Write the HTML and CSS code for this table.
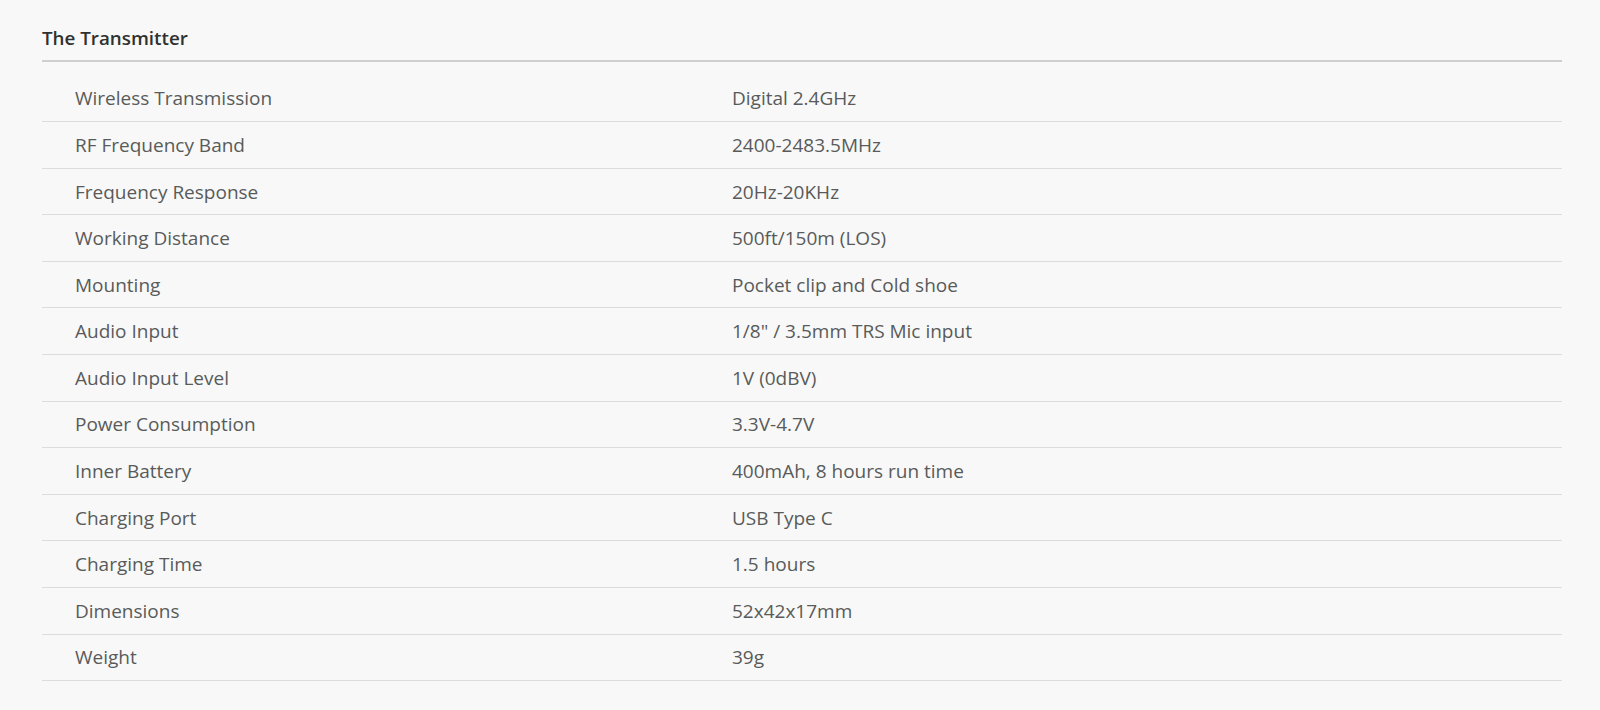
FILE: index.html
```html
<!DOCTYPE html>
<html lang="en">
<head>
<meta charset="utf-8">
<title>The Transmitter</title>
<link rel="stylesheet" href="styles.css">
</head>
<body>
<section class="specs">
  <h2 class="specs-title">The Transmitter</h2>
  <div class="spec-table">
    <div class="spec-row"><div class="spec-label">Wireless Transmission</div><div class="spec-value">Digital 2.4GHz</div></div>
    <div class="spec-row"><div class="spec-label">RF Frequency Band</div><div class="spec-value">2400-2483.5MHz</div></div>
    <div class="spec-row"><div class="spec-label">Frequency Response</div><div class="spec-value">20Hz-20KHz</div></div>
    <div class="spec-row"><div class="spec-label">Working Distance</div><div class="spec-value">500ft/150m (LOS)</div></div>
    <div class="spec-row"><div class="spec-label">Mounting</div><div class="spec-value">Pocket clip and Cold shoe</div></div>
    <div class="spec-row"><div class="spec-label">Audio Input</div><div class="spec-value">1/8" / 3.5mm TRS Mic input</div></div>
    <div class="spec-row"><div class="spec-label">Audio Input Level</div><div class="spec-value">1V (0dBV)</div></div>
    <div class="spec-row"><div class="spec-label">Power Consumption</div><div class="spec-value">3.3V-4.7V</div></div>
    <div class="spec-row"><div class="spec-label">Inner Battery</div><div class="spec-value">400mAh, 8 hours run time</div></div>
    <div class="spec-row"><div class="spec-label">Charging Port</div><div class="spec-value">USB Type C</div></div>
    <div class="spec-row"><div class="spec-label">Charging Time</div><div class="spec-value">1.5 hours</div></div>
    <div class="spec-row"><div class="spec-label">Dimensions</div><div class="spec-value">52x42x17mm</div></div>
    <div class="spec-row"><div class="spec-label">Weight</div><div class="spec-value">39g</div></div>
  </div>
</section>
</body>
</html>
```

FILE: styles.css
```css
html, body {
  margin: 0;
  padding: 0;
  background: #f8f8f8;
}
body {
  font-family: "Open Sans", "Liberation Sans", sans-serif;
  color: #595b5a;
}
.specs {
  padding: 25px 38px 0 42px;
}
.specs-title {
  margin: 0;
  font-size: 18.8px;
  font-weight: 600;
  color: #2f312e;
  line-height: 26px;
  padding-bottom: 9px;
  border-bottom: 2px solid #cfcfcf;
}
.spec-table {
  padding-top: 13.6px;
}
.spec-row {
  display: grid;
  grid-template-columns: 657px 1fr;
  height: 45.58px;
  border-bottom: 1px solid #dcdcdc;
  align-items: center;
  font-size: 19px;
  line-height: 24px;
}
.spec-label, .spec-value {
  padding-left: 33px;
}
```
